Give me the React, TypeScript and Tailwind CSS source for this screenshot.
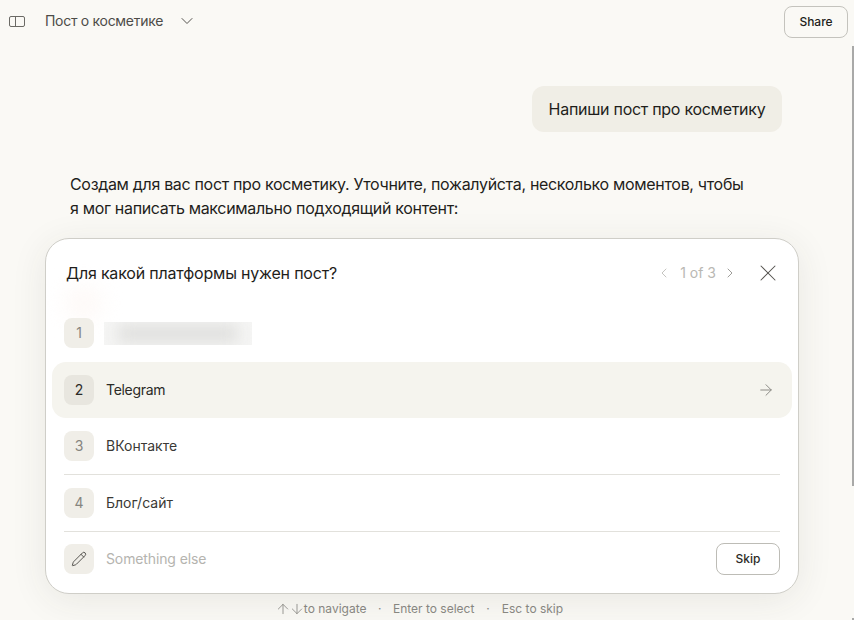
import { ArrowDown, ArrowRight, ArrowUp, ChevronDown, ChevronLeft, ChevronRight, Pencil, X } from "lucide-react";

const font = "font-['Inter','Liberation_Sans',sans-serif]";

function SidebarIcon() {
  return (
    <svg width="16" height="11" viewBox="0 0 16 11" fill="none" stroke="#6b6a65" strokeWidth="1">
      <rect x="0.5" y="0.5" width="15" height="10" rx="1.5" />
      <path d="M6.5 0.5v10" />
    </svg>
  );
}

function Tile({ n, active }: { n: number; active?: boolean }) {
  return (
    <div
      className={
        active
          ? "flex h-[30px] w-[30px] shrink-0 items-center justify-center rounded-lg bg-[#e8e6df] text-sm text-[#2b2a27]"
          : "flex h-[30px] w-[30px] shrink-0 items-center justify-center rounded-lg bg-[#f0eee8] text-sm text-[#86857f]"
      }
    >
      {n}
    </div>
  );
}

export default function App() {
  return (
    <div className={`${font} relative flex h-[620px] w-[854px] flex-col overflow-hidden bg-[#faf9f5] text-[#1f1e1b]`}>
      <header className="flex h-[42px] shrink-0 items-center pl-[9px] pr-[6px]">
        <SidebarIcon />
        <span className="ml-[20px] text-sm tracking-[-0.29px] text-[#4d4c48]">Пост о косметике</span>
        <ChevronDown className="ml-[14px] h-5 w-5 text-[#55534f]" strokeWidth={1.2} />
        <button className="ml-auto mt-[1px] h-8 w-16 rounded-lg border border-[#c4c3bd] text-xs font-medium text-[#1f1e1b]">
          Share
        </button>
      </header>

      <main className="flex flex-1 flex-col">
        <div className="mt-[44px] flex justify-end pr-[72px]">
          <div className="flex h-[46px] w-[250px] items-center justify-center rounded-xl bg-[#f0eee6] text-base tracking-[-0.28px]">
            Напиши пост про косметику
          </div>
        </div>

        <p className="ml-[70px] mt-[40px] w-[700px] text-base leading-6 tracking-[-0.32px]">
          Создам для вас пост про косметику. Уточните, пожалуйста, несколько моментов, чтобы
          <br />я мог написать максимально подходящий контент:
        </p>

        <section className="relative ml-[45px] mt-[18px] h-[356px] w-[754px] shrink-0 rounded-[24px] border border-[#cfcec8] bg-white px-[6px] shadow-[0_6px_36px_rgba(60,55,40,0.09)]">
          <div className="absolute left-[18px] top-[44px] h-[40px] w-[40px] rounded-full bg-[#fefaf8] blur-[10px]" />

          <div className="relative flex h-[66px] items-center pl-[14px] pr-[10px] pt-[2px]">
            <h2 className="text-base tracking-[-0.2px]">Для какой платформы нужен пост?</h2>
            <div className="ml-auto flex items-center text-[#b9b8b3]">
              <ChevronLeft className="h-4 w-4" strokeWidth={1.25} />
              <span className="ml-[8px] text-sm">1 of 3</span>
              <ChevronRight className="ml-[6px] h-4 w-4 text-[#8a8984]" strokeWidth={1.25} />
              <X className="ml-[16px] h-7 w-7 text-[#55534f]" strokeWidth={0.9} />
            </div>
          </div>

          <div className="relative mb-[1px] flex h-[56px] items-center px-3">
            <Tile n={1} />
            <div className="ml-[10px] h-[23px] w-[148px] overflow-hidden bg-[#f5f5f4]">
              <div className="mx-[14px] my-[3px] h-[17px] bg-[#dededc] blur-[8px]" />
            </div>
          </div>

          <div className="flex h-[56px] items-center rounded-[14px] bg-[#f5f4ee] px-3">
            <Tile n={2} active />
            <span className="ml-3 text-sm tracking-[-0.3px] text-[#2b2a27]">Telegram</span>
            <ArrowRight className="ml-auto mr-[5px] h-[18px] w-[18px] text-[#8a8984]" strokeWidth={1.3} />
          </div>

          <div className="mx-3 flex h-[57px] items-center border-b border-[#e2e1dc]">
            <Tile n={3} />
            <span className="ml-3 text-sm text-[#3a3935]">ВКонтакте</span>
          </div>

          <div className="mx-3 flex h-[57px] items-center border-b border-[#e2e1dc]">
            <Tile n={4} />
            <span className="ml-3 text-sm text-[#3a3935]">Блог/сайт</span>
          </div>

          <div className="mx-3 flex h-[54px] items-center">
            <div className="flex h-[30px] w-[30px] shrink-0 items-center justify-center rounded-lg bg-[#f0eee8]">
              <Pencil className="h-4 w-4 text-[#3a3935]" strokeWidth={1.25} />
            </div>
            <span className="ml-3 text-sm tracking-[-0.12px] text-[#b5b4af]">Something else</span>
            <button className="ml-auto h-8 w-16 rounded-lg border border-[#bdbcb6] bg-white text-xs font-medium text-[#2b2a27]">
              Skip
            </button>
          </div>
        </section>

        <div className="mt-[7px] flex items-center justify-center pr-[14px] text-xs text-[#8a8984]">
          <ArrowUp className="-mx-[2px] h-4 w-4" strokeWidth={1.25} />
          <ArrowDown className="-mr-[1px] h-4 w-4" strokeWidth={1.25} />
          <span>to navigate</span>
          <span className="mx-[11.5px]">·</span>
          <span>Enter to select</span>
          <span className="mx-[12px]">·</span>
          <span>Esc to skip</span>
        </div>
      </main>

      {/* scrollbar thumb on the window edge */}
      <div className="absolute right-0 top-[46px] h-[440px] w-[2px] bg-[#a9a9a8]" />
      <div className="absolute bottom-0 right-0 h-[2px] w-[2px] bg-[#a9a9a8]" />
    </div>
  );
}
